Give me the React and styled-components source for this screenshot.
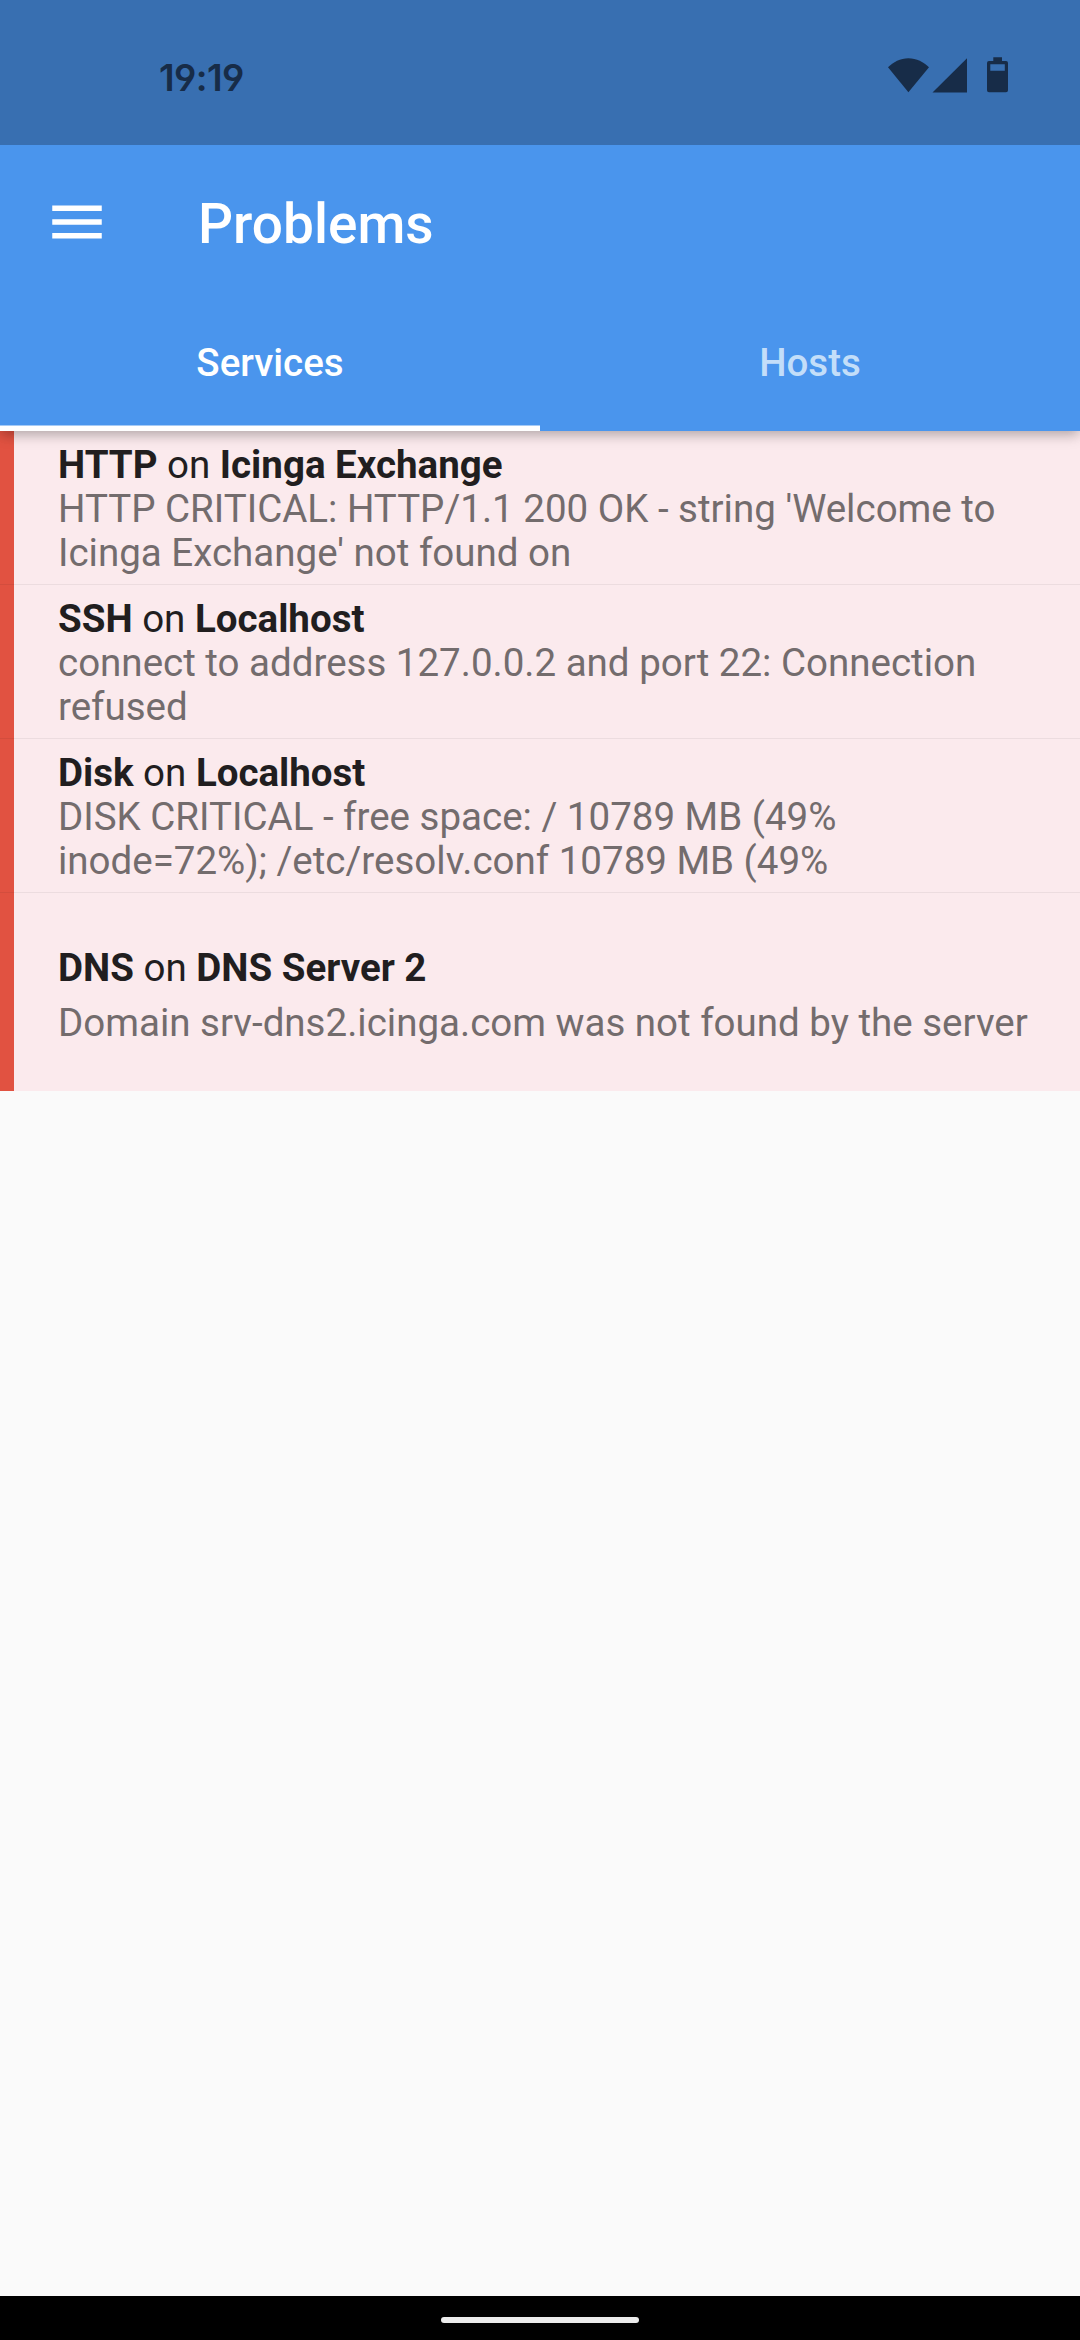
import React from "react";
import styled, { createGlobalStyle } from "styled-components";

const GlobalStyle = createGlobalStyle`
  * { box-sizing: border-box; }
  body { margin: 0; background: #fafafa; }
`;

const Screen = styled.div`
  width: 1080px;
  height: 2340px;
  display: flex;
  flex-direction: column;
  overflow: hidden;
  background: #fafafa;
  font-family: Roboto, sans-serif;
`;

const StatusBar = styled.div`
  position: relative;
  z-index: 1;
  height: 145px;
  padding: 5px 70px 0 159px;
  display: flex;
  align-items: center;
  justify-content: space-between;
  background: #386fb1;
  color: #172c48;
`;

const Clock = styled.time`
  margin-top: 5px;
  font: 600 37px/44px Inter, sans-serif;
  font-feature-settings: "cv04";
  letter-spacing: -0.6px;
`;

const StatusIcons = styled.svg`
  display: block;
  width: 126px;
  height: 42px;
  fill: currentColor;
`;

const Header = styled.header`
  position: relative;
  height: 286px;
  display: flex;
  flex-direction: column;
  background: #4a95ed;
  color: #fff;
  box-shadow: 0 4px 11px -2px rgba(0, 0, 0, 0.2), 0 5px 14px rgba(0, 0, 0, 0.14);
`;

const Toolbar = styled.div`
  height: 154px;
  padding-left: 44px;
  display: flex;
  align-items: center;
  gap: 88px;
`;

const MenuIcon = styled.svg`
  width: 66px;
  height: 66px;
  fill: #fff;
`;

const Title = styled.h1`
  margin: 4px 0 0;
  font-size: 55px;
  line-height: 64px;
  font-weight: 500;
`;

const Tabs = styled.nav`
  height: 132px;
  display: grid;
  grid-template-columns: 1fr 1fr;
`;

const Tab = styled.div`
  display: flex;
  align-items: center;
  justify-content: center;
  border-bottom: 5px solid ${(p) => (p.$active ? "#fff" : "transparent")};
  box-shadow: ${(p) => (p.$active ? "inset 0 -1px 0 rgba(255, 255, 255, 0.5)" : "none")};
  color: ${(p) => (p.$active ? "#fff" : "#c3def9")};
  font-size: 38.5px;
  line-height: 46px;
  font-weight: 500;
`;

const List = styled.main`
  flex: 1;
`;

const Row = styled.article`
  height: ${(p) => (p.$tall ? 198 : 154)}px;
  padding: ${(p) => (p.$tall ? "53px 0 0 58px" : "12px 0 0 58px")};
  border-bottom: ${(p) => (p.$tall ? "0" : "1px solid rgba(0, 0, 0, 0.06)")};
  background: linear-gradient(to right, #e15241 13.5px, #fbeaed 14px) border-box;
  font-size: 38.5px;
  line-height: 44px;
`;

const Heading = styled.div`
  color: #211e1f;
  margin-bottom: ${(p) => (p.$tall ? 11 : 0)}px;

  b { font-weight: 700; }
`;

const Output = styled.div`
  color: #736c6d;
  white-space: pre-line;
`;

const NavigationBar = styled.footer`
  height: 44px;
  display: flex;
  align-items: center;
  justify-content: center;
  padding-top: 4px;
  background: #000;
`;

const Handle = styled.div`
  width: 198px;
  height: 6px;
  border-radius: 3px;
  background: #ececec;
`;

const problems = [
  {
    service: "HTTP",
    host: "Icinga Exchange",
    output: "HTTP CRITICAL: HTTP/1.1 200 OK - string 'Welcome to\nIcinga Exchange' not found on",
  },
  {
    service: "SSH",
    host: "Localhost",
    output: "connect to address 127.0.0.2 and port 22: Connection\nrefused",
  },
  {
    service: "Disk",
    host: "Localhost",
    output: "DISK CRITICAL - free space: / 10789 MB (49%\ninode=72%); /etc/resolv.conf 10789 MB (49%",
  },
  {
    service: "DNS",
    host: "DNS Server 2",
    output: "Domain srv-dns2.icinga.com was not found by the server",
    tall: true,
  },
];

export default function App() {
  return (
    <Screen>
      <GlobalStyle />
      <StatusBar>
        <Clock>19:19</Clock>
        <StatusIcons viewBox="884 54 126 42">
          <path d="M908.4 92.3 888 67.3C893 62 900.5 58.2 908.4 58.2S924 62 929 67.3Z" />
          <path d="M932.5 92.5 967 58.3V92.5Z" />
          <path
            fillRule="evenodd"
            d="M993.3 57.3H1002V61H1006a2 2 0 0 1 2 2V90.3a2 2 0 0 1-2 2H989a2 2 0 0 1-2-2V63a2 2 0 0 1 2-2H993.3ZM990.3 64.3V70.7H1004.8V64.3Z"
          />
        </StatusIcons>
      </StatusBar>
      <Header>
        <Toolbar>
          <MenuIcon viewBox="0 0 24 24">
            <path d="M3 18h18v-2H3v2zm0-5h18v-2H3v2zm0-7v2h18V6H3z" />
          </MenuIcon>
          <Title>Problems</Title>
        </Toolbar>
        <Tabs>
          <Tab $active>Services</Tab>
          <Tab>Hosts</Tab>
        </Tabs>
      </Header>
      <List>
        {problems.map((p) => (
          <Row key={p.service} $tall={p.tall}>
            <Heading $tall={p.tall}>
              <b>{p.service}</b> on <b>{p.host}</b>
            </Heading>
            <Output>{p.output}</Output>
          </Row>
        ))}
      </List>
      <NavigationBar>
        <Handle />
      </NavigationBar>
    </Screen>
  );
}
